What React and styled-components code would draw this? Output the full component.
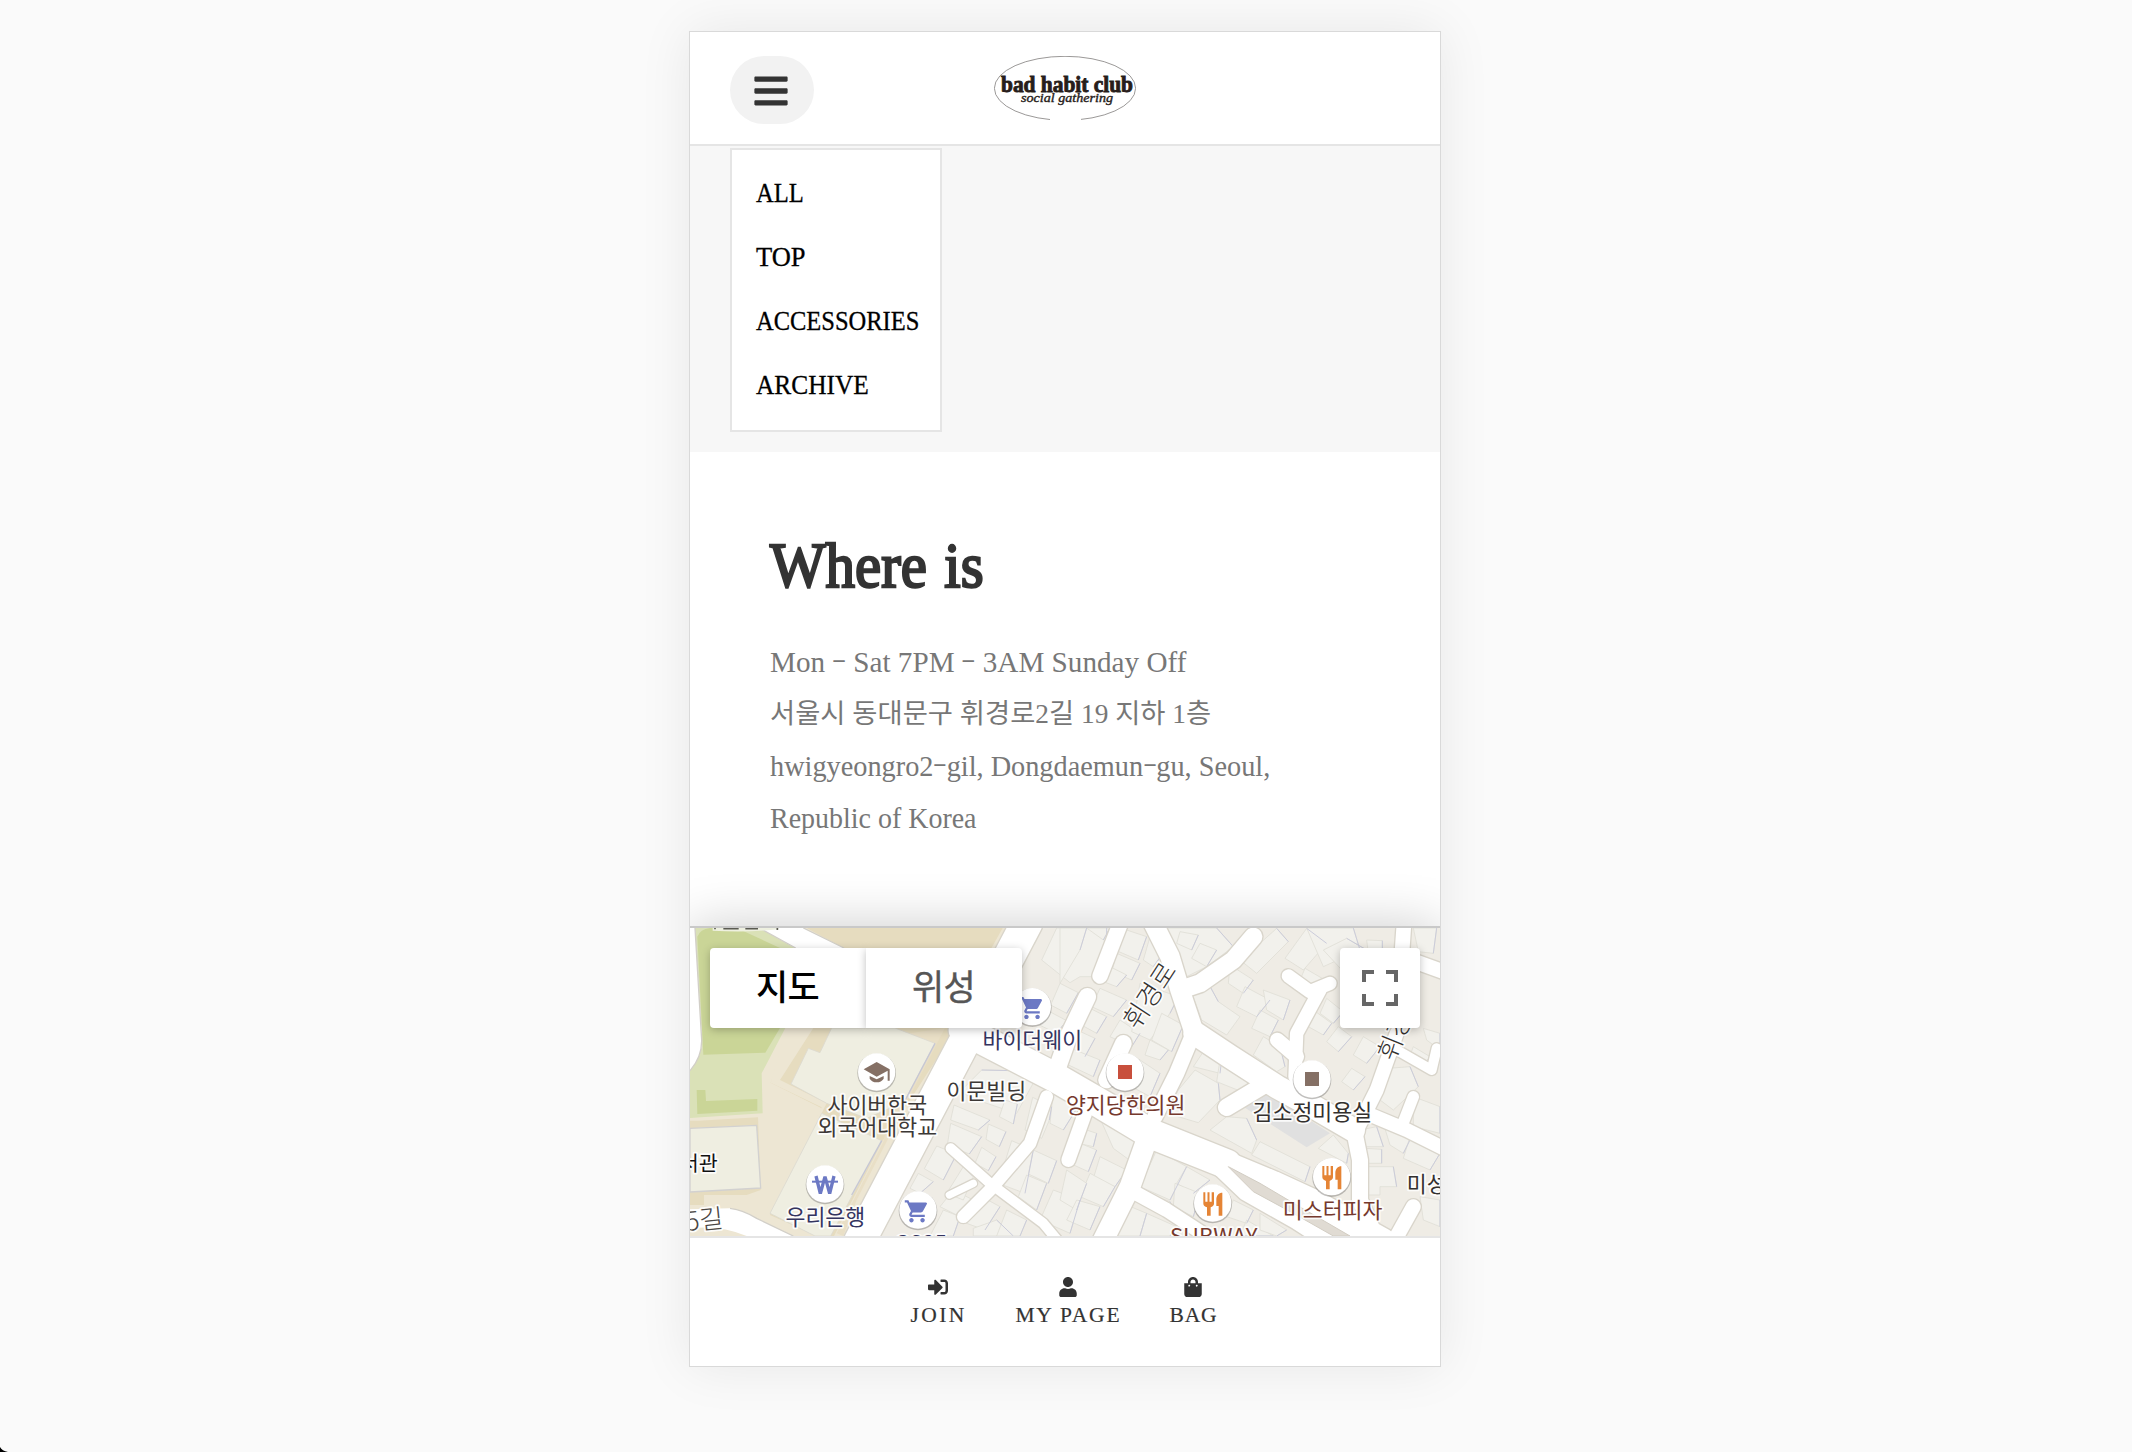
import React from "react";
import styled, { createGlobalStyle } from "styled-components";
import { FaBars, FaSignInAlt, FaUser, FaShoppingBag } from "react-icons/fa";
import { MdShoppingCart, MdSchool } from "react-icons/md";

const Global = createGlobalStyle`
  * { box-sizing: border-box; }
  html, body { margin: 0; padding: 0; background: #fafafa; }
  body { height: 1452px; overflow: hidden; }
`;

const serif = `"Liberation Serif", "Noto Sans CJK KR", serif`;
const sans = `Roboto, "Noto Sans CJK KR", sans-serif`;

const Page = styled.div`
  position: relative;
  height: 1452px;
  padding: 31px 0 0 689px;
  font-family: ${serif};
`;

const Card = styled.main`
  width: 752px;
  height: 1336px;
  display: flex;
  flex-direction: column;
  border: 1px solid #d9d9d9;
  background: #fff;
  box-shadow: 0 0 50px rgba(0, 0, 0, 0.08);
  overflow: hidden;
`;

const Header = styled.header`
  flex: none;
  height: 114px;
  display: grid;
  grid-template-columns: 1fr auto 1fr;
  align-items: start;
  padding: 24px 40px 0;
  border-bottom: 2px solid #e5e5e5;
`;

const MenuButton = styled.button`
  width: 84px;
  height: 68px;
  display: flex;
  align-items: center;
  justify-content: center;
  padding: 2px 3px 0 0;
  border: 0;
  border-radius: 34px;
  background: #f2f2f2;
  color: #333;
  font-size: 38px;
`;

const Logo = styled.svg`
  display: block;
  width: 142px;
  height: 64px;
`;

const MenuArea = styled.section`
  flex: none;
  height: 306px;
  padding: 2px 40px;
  background: #f7f7f7;
`;

const MenuList = styled.nav`
  width: 212px;
  height: 284px;
  display: flex;
  flex-direction: column;
  padding: 11px 24px;
  border: 2px solid #e5e5e5;
  background: #fff;
`;

const MenuItem = styled.a`
  height: 64px;
  font-size: 27px;
  line-height: 64px;
  white-space: nowrap;
  color: #000;
  -webkit-text-stroke: 0.3px #000;
  transform: scaleX(${(p) => p.$sx});
  transform-origin: left;
`;

const Info = styled.section`
  flex: none;
  height: 474px;
  padding: 72px 80px 0;
`;

const Title = styled.h1`
  margin: 0;
  font-size: 64px;
  font-weight: 400;
  line-height: 84px;
  white-space: nowrap;
  word-spacing: 3px;
  color: #333;
  -webkit-text-stroke: 2.4px #333;
  transform: scaleX(0.92);
  transform-origin: left;
`;

const Address = styled.div`
  margin-top: 28px;
  color: #777;
`;

const AddressLine = styled.p`
  margin: 0;
  height: 52px;
  line-height: 52px;
  font-size: ${(p) => p.$size || 30}px;
  white-space: nowrap;
  transform: scaleX(${(p) => p.$sx});
  transform-origin: left;
`;

const Dash = styled.span`
  display: inline-block;
  line-height: 1;
  margin: 0 2px;
  transform: translateY(-3px) scale(1.5, 0.8);
`;

const MapFrame = styled.section`
  position: relative;
  flex: none;
  height: 310px;
  border-top: 2px solid #c9c9c9;
  box-shadow: 0 0 50px rgba(0, 0, 0, 0.2);
`;

const MapCanvas = styled.svg`
  display: block;
  width: 750px;
  height: 308px;
  font-family: "Noto Sans CJK KR", sans-serif;
`;

const MapControls = styled.div`
  position: absolute;
  inset: 20px 20px auto;
  display: flex;
  justify-content: space-between;
`;

const TypeSwitch = styled.div`
  display: flex;
`;

const TypeButton = styled.button`
  width: 156px;
  height: 80px;
  padding: 0 1px 8px 0;
  border: 0;
  border-radius: ${(p) => (p.$active ? "4px 0 0 4px" : "0 4px 4px 0")};
  background: #fff;
  box-shadow: 0 2px 8px rgba(0, 0, 0, 0.25);
  font-family: ${sans};
  font-size: 35px;
  font-weight: ${(p) => (p.$active ? 500 : 400)};
  letter-spacing: -0.8px;
  color: ${(p) => (p.$active ? "#000" : "#565656")};
  -webkit-text-stroke: ${(p) => (p.$active ? 0 : 0.4)}px #565656;
`;

const FullscreenButton = styled.button`
  width: 80px;
  height: 80px;
  display: grid;
  place-items: center;
  padding: 0;
  border: 0;
  border-radius: 4px;
  background: #fff;
  box-shadow: 0 2px 8px rgba(0, 0, 0, 0.25);
`;

const Footer = styled.footer`
  position: relative;
  flex: 1;
  border-top: 2px solid #e5e5e5;
  background: #fff;
  display: flex;
  padding: 39px 0 0 220px;
  gap: 50px;
`;

const FooterLink = styled.a`
  width: ${(p) => p.$w}px;
  display: flex;
  flex-direction: column;
  align-items: center;
  color: #333;
  font-size: 20px;
`;

const FooterLabel = styled.span`
  margin-top: 4px;
  font-size: 21.5px;
  line-height: 28px;
  letter-spacing: ${(p) => p.$ls}px;
  margin-right: -${(p) => p.$ls}px;
  white-space: nowrap;
  -webkit-text-stroke: 0.2px #333;
`;

const Corner = styled.svg`
  position: absolute;
  left: 0;
  bottom: 0;
  width: 8px;
  height: 5px;
`;

const menu = [
  ["ALL", 0.91],
  ["TOP", 0.98],
  ["ACCESSORIES", 0.907],
  ["ARCHIVE", 0.94],
];

const lines = [
  { text: "Mon - Sat 7PM - 3AM Sunday Off", sx: 0.972 },
  { text: "서울시 동대문구 휘경로2길 19 지하 1층", sx: 1.013, size: 27 },
  { text: "hwigyeongro2-gil, Dongdaemun-gu, Seoul,", sx: 0.943 },
  { text: "Republic of Korea", sx: 0.932 },
];

/* Map data, in thirds of a pixel. The east half starts at x = 1140. */
const westBuildings = [
  "1130,84 1280,84 1280,230 1200,230 1170,248 1085,180",
  "1140,250 1195,278 1160,340 1112,315",
  "1100,330 1160,362 1130,400 1080,376",
  "840,575 905,510 1000,512 1062,545 1010,640 905,605",
  "822,615 930,660 895,690 812,660",
  "812,670 905,710 868,762 802,735",
  "925,672 978,695 958,740 918,718",
  "975,600 1012,612 1000,672 958,650",
  "770,738 830,762 790,840 733,806",
  "905,742 948,770 925,812 885,790",
  "1058,592 1115,620 1108,660 1085,715 1035,690",
  "1120,570 1200,610 1150,690 1110,670",
  "995,722 1060,750 1035,880 955,850",
  "1060,750 1130,782 1105,850 1045,822",
  "1040,825 1100,850 1070,930 1015,890",
  "1120,870 1200,900 1170,1000 1080,960",
  "820,870 890,905 860,960 780,920",
  "905,890 960,920 915,990 860,970",
  "790,930 840,950 820,1008 750,1008",
  "880,985 950,960 1000,1008 880,1008",
  "800,880 850,800 880,830 850,900",
  "980,930 1040,960 1020,1008 950,1008",
  "715,820 760,845 720,880 690,865",
];

const eastBuildings = [
  "0,84 80,84 60,150 0,250",
  "80,84 150,84 130,120",
  "200,90 260,110 235,180 165,150",
  "170,160 240,190 215,240 155,215",
  "150,200 200,225 170,260 130,245",
  "310,84 470,84 520,140 440,200 370,235",
  "360,95 415,105 395,150 350,130",
  "420,130 470,150 440,200 395,175",
  "270,110 305,165 280,200 250,180",
  "120,265 200,300 160,350 95,320",
  "80,320 140,350 110,400 55,370",
  "40,385 105,415 75,470 15,440",
  "20,440 120,480 100,530 15,490",
  "180,360 240,400 215,440 150,410",
  "240,250 355,290 330,340 270,420 215,395",
  "305,340 370,375 335,455 275,420",
  "270,420 325,450 300,480 255,465",
  "225,470 300,520 270,590 215,560",
  "390,265 445,250 475,305 540,350 500,405 425,360",
  "510,195 580,240 550,280 505,250",
  "600,130 650,85 685,125 590,220 540,180",
  "675,175 740,85 800,130 730,210",
  "740,84 880,84 900,150 790,200",
  "790,150 860,115 920,150 850,215",
  "920,120 967,122 967,160 925,160",
  "555,260 630,300 590,350 530,320",
  "600,330 655,360 630,410 575,385",
  "610,270 690,300 670,360 620,330",
  "735,205 795,240 765,265 720,240",
  "800,295 850,335 820,370 780,340",
  "760,330 815,370 790,405 745,380",
  "835,380 875,410 835,455 800,425",
  "910,410 960,440 920,490 880,465",
  "875,505 915,530 880,570 845,545",
  "430,455 485,480 480,520 400,500",
  "480,480 572,540 545,575 470,545",
  "405,510 475,550 480,600 415,668 320,640 355,570",
  "500,650 560,655 590,720 575,760 450,690",
  "600,725 750,800 735,845 575,765",
  "610,410 660,440 675,500 650,515 580,465",
  "820,705 865,760 860,790 775,745",
  "985,505 1050,500 1075,560 1000,630 960,600",
  "1060,440 1110,470 1090,500 1045,480",
  "1060,590 1140,620 1140,700 1060,680",
  "900,690 950,680 970,740 910,740",
  "915,745 965,748 965,790 918,790",
  "925,800 1000,800 1010,860 960,860 960,885 925,885",
  "1060,84 1130,84 1120,160 1075,155",
  "1090,385 1140,400 1140,450 1100,420",
  "970,670 1060,700 1030,760 990,735",
  "1050,710 1140,760 1110,810 1030,775",
  "1080,890 1140,900 1140,980 1090,960",
  "80,690 110,700 100,740 55,730",
  "120,655 240,710 215,785 160,745",
  "60,730 110,750 85,815 30,790",
  "120,770 200,810 165,860 100,835",
  "90,820 165,860 130,920 60,890",
  "20,810 80,850 50,930 0,900",
  "50,900 120,920 90,990 20,960",
  "290,750 380,800 330,900 240,860",
  "380,800 450,840 400,880 350,850",
  "240,870 330,905 350,960 300,930",
  "200,915 260,940 240,1008 150,1008",
  "260,940 350,980 330,1008 240,1008",
  "345,850 420,880 400,950 340,920",
  "520,900 580,930 560,970 500,950",
  "560,960 640,1008 540,1008",
  "600,940 680,990 650,1008 600,990",
];

const roads = [
  { w: 94, d: "M1040 70 L540 1022" },
  { w: 88, d: "M850 390 L1130 535 L1260 610 L1410 700 L1640 792" },
  { w: 74, d: "M1600 775 L1780 850 L1900 905 L2110 1022" },
  { w: 56, d: "M1590 770 L1700 875 L1850 960 L1960 1030" },
  { w: 58, d: "M1420 70 L1470 170 L1500 270 L1540 390" },
  { w: 70, d: "M1545 400 L1650 470 L1790 560 L1900 620 L2020 690" },
  { w: 46, d: "M1540 400 L1490 520 L1425 650" },
  { w: 54, d: "M1720 110 L1660 180 L1560 250 L1500 270" },
  { w: 46, d: "M1325 60 L1260 228" },
  { w: 52, d: "M1222 290 L1165 410 L1130 510" },
  { w: 50, d: "M1330 430 L1280 540" },
  { w: 38, d: "M1100 590 L1050 730 L930 870 L850 950" },
  { w: 30, d: "M812 745 L930 850 L1090 970 L1140 1030" },
  { w: 22, d: "M808 885 L880 850" },
  { w: 42, d: "M1215 640 L1165 780" },
  { w: 62, d: "M1400 720 L1350 860 L1265 1030" },
  { w: 42, d: "M1350 870 L1460 930 L1590 1015" },
  { w: 40, d: "M1825 228 L1890 275 L1950 250" },
  { w: 40, d: "M1920 270 L1850 400 L1845 530" },
  { w: 44, d: "M1792 420 L1850 470" },
  { w: 52, d: "M1640 622 L1760 550" },
  { w: 44, d: "M2172 70 L2165 170 L2290 215" },
  { w: 42, d: "M2150 400 L2090 570 L2030 690" },
  { w: 30, d: "M2150 450 L2255 510 L2270 445" },
  { w: 42, d: "M2060 640 L2180 690 L2290 745" },
  { w: 34, d: "M2200 590 L2165 680" },
  { w: 48, d: "M2020 680 L2040 780 L2040 900 L2090 1020" },
  { w: 44, d: "M2200 920 L2150 1010" },
];

const labels = [
  { x: 1057, y: 444, c: "#34345f", t: "바이더웨이" },
  { x: 919, y: 598, c: "#3c3836", t: "이문빌딩" },
  { x: 592, y: 639, c: "#3c3836", t: "사이버한국" },
  { x: 592, y: 705, c: "#3c3836", t: "외국어대학교" },
  { x: 436, y: 976, c: "#34345f", t: "우리은행" },
  { x: 56, y: 812, c: "#111", t: "서관", s: 62 },
  { x: 1337, y: 640, c: "#75392d", t: "양지당한의원" },
  { x: 1897, y: 660, c: "#33302e", t: "김소정미용실" },
  { x: 1958, y: 955, c: "#75392d", t: "미스터피자" },
  { x: 1601, y: 1032, c: "#75392d", t: "SUBWAY", s: 66 },
  { x: 2240, y: 875, c: "#33302e", t: "미성" },
  { x: 722, y: 1053, c: "#34345f", t: "GS25", s: 66 },
  { x: 76, y: 987, c: "#4a4644", t: "5길", s: 78, r: -6, w: 300 },
  { x: 1433, y: 302, c: "#33302e", t: "휘경로", r: -57, w: 300, s: 79 },
  { x: 2170, y: 420, c: "#33302e", t: "휘경", r: -68, w: 300, s: 78 },
];

const Label = ({ x, y, c, t, s = 65, r = 0, w = 400 }) => (
  <text
    x={x}
    y={y}
    fontSize={s}
    fontWeight={w}
    fill={c}
    stroke="#fff"
    strokeOpacity="0.85"
    strokeWidth="11"
    strokeLinejoin="round"
    paintOrder="stroke"
    textAnchor="middle"
    transform={r ? `rotate(${r} ${x} ${y})` : undefined}
  >
    {t}
  </text>
);

const Pin = ({ x, y, children }) => (
  <g transform={`translate(${x} ${y})`}>
    <circle cy="3" r="58" fill="#8c8a86" opacity="0.55" />
    <circle r="56" fill="#fff" />
    {children}
  </g>
);

const Utensils = () => (
  <path
    fill="#e58435"
    d="M-28-32h6v28h6.500v-28h6v28h6.500v-28h7v34c0 6-5 9-10 11v25h-11v-25c-6-2-11-5-11-11zM29-31v69h-11v-29h-7v-20c0-12 8-20 18-20z"
  />
);

const Won = () => (
  <g fill="none" stroke="#6c79c4">
    <path d="M-27-24L-14 29L0-22L14 29L27-24" strokeWidth="10" strokeLinejoin="bevel" />
    <path d="M-39-7H39" strokeWidth="6" />
  </g>
);

const Graduate = () => (
  <g fill="#857065">
    <path d="M-39-8L0-30L39-8V26H33V-4L0 14Z" />
    <path d="M-21 12L0 22L21 12V20Q14 31 0 31T-21 20Z" />
  </g>
);

const StreetMap = () => (
  <MapCanvas viewBox="30 84 2250 924">
    <rect x="30" y="84" width="2250" height="924" fill="#efece5" />

    {/* campus */}
    <path d="M30 84H980L495 1008H30Z" fill="#ede6d3" />
    <path d="M380 84H968L800 384H345V144H490Z" fill="#e6dcbf" />
    <path d="M345 384L272 548L425 625L270 945L410 1008H462L608 722L690 600L830 384Z" fill="#e6dcbf" />
    <path d="M400 384L300 540L440 610L400 690L290 920L250 945L425 622L272 548L320 384Z" fill="#ede6d3" />
    <path d="M690 400L795 384L530 900L490 1008L470 1000L610 725Z" fill="#e9dfc6" />
    <path d="M55 662L234 652L242 870L200 885L72 885V915H30V662Z" fill="#e6dcbf" />
    <path d="M455 384H645L765 430L672 606L560 655L440 610L333 552L385 445L420 458Z" fill="#efeee1" stroke="#dcdad0" strokeWidth="2.500" />
    <path d="M765 430L676 600" stroke="#c6c7d4" strokeWidth="4" />
    <path d="M425 640L605 722L452 1008H405L270 940Z" fill="#efeee1" stroke="#dcdad0" strokeWidth="2.500" />
    <path d="M605 722L515 885" stroke="#c6c7d4" strokeWidth="4" />
    <path d="M30 685L230 676L242 864L30 876Z" fill="#efeee1" stroke="#d2d1d0" strokeWidth="4" />

    {/* park */}
    <path d="M45 84H240L345 144V384H316L245 520L248 640L30 654V510L66 440Z" fill="#dae1b7" />
    <path d="M52 110Q60 88 90 84H170L300 144V384L256 458L70 464Z" fill="#cad597" />
    <path d="M50 570H76L78 603L232 597V632L52 642Z" fill="#cad597" />
    <path d="M30 84H45L66 420Q66 470 30 512Z" fill="#fff" />
    <path d="M45 84L65 420Q66 470 30 512" fill="none" stroke="#d2cfc8" strokeWidth="4" />
    <path d="M238 84H370L492 144H345Z" fill="#fff" />
    <path d="M238 84L347 144M370 84L492 144" stroke="#d2cfc8" strokeWidth="4" />
    <path d="M30 928L150 925Q190 930 230 955L340 1008H200Q120 975 30 985Z" fill="#fff" />
    <path d="M150 925Q190 930 230 955L340 1008" fill="none" stroke="#d2cfc8" strokeWidth="4" />
    <path d="M98 84H296V88Q200 98 98 92Z" fill="#eef0e0" />
    <path d="M105 84V88M130 86H176M196 86H234M292 84V90" stroke="#5a5a52" strokeWidth="5" />

    {/* city blocks */}
    <g fill="#f2f1ec" stroke="#e0ded6" strokeWidth="2.500" strokeLinejoin="round">
      {westBuildings.map((p) => <polygon key={p} points={p} />)}
      <g transform="translate(1140 0)">
        {eastBuildings.map((p) => <polygon key={p} points={p} />)}
      </g>
    </g>
    <g fill="none" stroke="#cbccda" strokeWidth="3">
      {[...westBuildings.map((p) => [p, 0]), ...eastBuildings.map((p) => [p, 1140])].map(([p, dx]) => {
        const pts = p.split(" ");
        return <polyline key={p} points={pts.slice(1, 3).join(" ")} transform={`translate(${dx} 0)`} />;
      })}
    </g>
    <path d="M1690 620L1765 580L1950 700L1880 742Z" fill="#e0e0e0" />

    {/* streets */}
    <g fill="none" stroke="#d9d5cb" strokeLinecap="round" strokeLinejoin="round">
      {roads.map((r) => <path key={r.d} d={r.d} strokeWidth={r.w + 8} />)}
    </g>
    <g fill="none" stroke="#fff" strokeLinecap="round" strokeLinejoin="round">
      {roads.map((r) => <path key={r.d} d={r.d} strokeWidth={r.w} />)}
    </g>
    <path d="M1645 800L1740 850L1850 915L2010 1008H1960L1840 940L1720 875Z" fill="#e0dbd3" stroke="#d2cdc3" strokeWidth="3" />

    <Pin x={1057} y={320}><MdShoppingCart x={-41} y={-36} size={80} color="#6c79c4" /></Pin>
    <Pin x={590} y={516}><Graduate /></Pin>
    <Pin x={435} y={852}><Won /></Pin>
    <Pin x={714} y={930}><MdShoppingCart x={-43} y={-36} size={80} color="#6c79c4" /></Pin>
    <Pin x={1335} y={516}><rect x="-21" y="-21" width="42" height="42" fill="#c84f3c" /></Pin>
    <Pin x={1896} y={537}><rect x="-21" y="-21" width="42" height="42" fill="#857065" /></Pin>
    <Pin x={1955} y={830}><Utensils /></Pin>
    <Pin x={1598} y={909}><Utensils /></Pin>

    {labels.map((l) => <Label key={l.t} {...l} />)}
  </MapCanvas>
);

const withDashes = (text) =>
  text.split("-").flatMap((part, i) => (i ? [<Dash key={i}>-</Dash>, part] : [part]));

export default function App() {
  return (
    <Page>
      <Global />
      <Card>
        <Header>
          <MenuButton aria-label="menu"><FaBars /></MenuButton>
          <Logo viewBox="0 0 142 64">
            <ellipse cx="71" cy="32.300" rx="70.600" ry="32" fill="none" stroke="#8f8c8b" strokeWidth="0.900" />
            <rect x="56" y="61" width="31" height="3" fill="#fff" />
            <g fill="#271d1a" stroke="#271d1a" fontFamily="Liberation Serif, serif" fontWeight="700">
              <text x="7" y="35.800" fontSize="22.500" strokeWidth="0.900" textLength="132" lengthAdjust="spacingAndGlyphs">bad habit club</text>
              <text x="27" y="45.800" fontSize="11.500" fontStyle="italic" fontWeight="400" strokeWidth="0.350" textLength="92" lengthAdjust="spacingAndGlyphs">social gathering</text>
            </g>
          </Logo>
        </Header>

        <MenuArea>
          <MenuList>
            {menu.map(([t, sx]) => <MenuItem key={t} $sx={sx}>{t}</MenuItem>)}
          </MenuList>
        </MenuArea>

        <Info>
          <Title>Where is</Title>
          <Address>
            {lines.map((l) => (
              <AddressLine key={l.text} $sx={l.sx} $size={l.size}>{withDashes(l.text)}</AddressLine>
            ))}
          </Address>
        </Info>

        <MapFrame>
          <StreetMap />
          <MapControls>
            <TypeSwitch>
              <TypeButton $active>지도</TypeButton>
              <TypeButton>위성</TypeButton>
            </TypeSwitch>
            <FullscreenButton aria-label="fullscreen">
              <svg width="36" height="36" viewBox="0 0 36 36" fill="none" stroke="#666" strokeWidth="4">
                <path d="M2 12V2H12M24 2H34V12M34 24V34H24M12 34H2V24" />
              </svg>
            </FullscreenButton>
          </MapControls>
        </MapFrame>

        <Footer>
          <FooterLink $w={55}><FaSignInAlt /><FooterLabel $ls={2.4}>JOIN</FooterLabel></FooterLink>
          <FooterLink $w={105}><FaUser /><FooterLabel $ls={1.8}>MY PAGE</FooterLabel></FooterLink>
          <FooterLink $w={46}><FaShoppingBag /><FooterLabel $ls={0.8}>BAG</FooterLabel></FooterLink>
        </Footer>
      </Card>
      <Corner viewBox="0 0 8 5"><path d="M0 0Q2 4 8 5H0Z" fill="#000" /></Corner>
    </Page>
  );
}
